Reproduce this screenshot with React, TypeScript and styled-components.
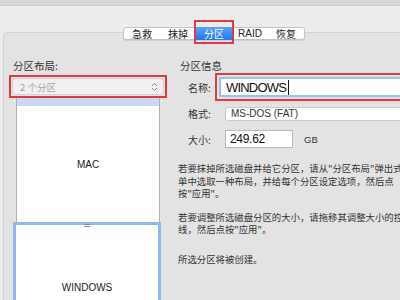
import styled, { createGlobalStyle } from "styled-components";

const GlobalStyle = createGlobalStyle`
  html, body {
    margin: 0;
    padding: 0;
    background: #ececec;
  }
  * {
    box-sizing: border-box;
  }
`;

const CJK = `"Noto Sans CJK SC", "Noto Sans", sans-serif`;
const LATIN = `"Liberation Sans", Arial, sans-serif`;

const tabs = ["急救", "抹掉", "分区", "RAID", "恢复"];

export default function App() {
  return (
    <>
      <GlobalStyle />
      <Window>
        <TopBar />
        <Panel>
          <Tabs>
            {tabs.map((t) => (
              <Tab key={t} active={t === "分区"} latin={t === "RAID"}>
                {t}
                {t === "分区" && <TabHighlight />}
              </Tab>
            ))}
          </Tabs>
          <Body>
            <LeftColumn>
              <Label>分区布局:</Label>
              <RedBox>
                <Popup>
                  <PopupText>2 个分区</PopupText>
                  <Chevrons />
                </Popup>
              </RedBox>
              <MacPartition>
                <SelectionStripe />
                <PartitionName>MAC</PartitionName>
              </MacPartition>
              <WindowsPartition>
                <Handle />
                <PartitionName>WINDOWS</PartitionName>
              </WindowsPartition>
            </LeftColumn>
            <RightColumn>
              <Label>分区信息</Label>
              <Row>
                <FieldLabel width={27}>名称:</FieldLabel>
                <NameBox>
                  <NameInput>
                    WINDOWS
                    <Caret />
                  </NameInput>
                </NameBox>
              </Row>
              <Row gap={5}>
                <FieldLabel width={37}>格式:</FieldLabel>
                <FormatPopup>
                  <span>MS-DOS (FAT)</span>
                  <PopupButton />
                </FormatPopup>
              </Row>
              <Row gap={9}>
                <FieldLabel width={37}>大小:</FieldLabel>
                <SizeInput>249.62</SizeInput>
                <Unit>GB</Unit>
              </Row>
              <Description>
                <Para space={11}>
                  若要抹掉所选磁盘并给它分区，请从"分区布局"弹出式
                  <br />
                  单中选取一种布局，并给每个分区设定选项，然后点
                  <br />
                  按"应用"。
                </Para>
                <Para space={17}>
                  若要调整所选磁盘分区的大小，请拖移其调整大小的控
                  <br />
                  线，然后点按"应用"。
                </Para>
                <Para space={0}>所选分区将被创建。</Para>
              </Description>
            </RightColumn>
          </Body>
        </Panel>
      </Window>
    </>
  );
}

function Chevrons() {
  return (
    <svg width="7" height="10" viewBox="0 0 7 10">
      <path
        d="M1 4 L3.5 1.5 L6 4 M1 6 L3.5 8.5 L6 6"
        fill="none"
        stroke="#8a8a8a"
        strokeWidth="1"
      />
    </svg>
  );
}

const Window = styled.div`
  width: 400px;
  height: 300px;
  overflow: hidden;
  background: #ececec;
  font-family: ${CJK};
  color: #2c2c2c;
`;

const TopBar = styled.div`
  height: 6px;
  background: #d7d7d7;
  border-bottom: 1px solid #cdcdcd;
`;

const Panel = styled.div`
  margin: 26px 0 0 3px;
  width: 440px;
  height: 300px;
  background: #e3e3e3;
  border: 1px solid #d2d2d2;
  border-radius: 5px;
`;

const Tabs = styled.div`
  display: flex;
  margin: -6px 0 0 119px;
  width: 182px;
  height: 13px;
  background: #fff;
  border: 1px solid #c4c4c4;
  border-radius: 3px;
  box-shadow: 0 1px 0 rgba(0, 0, 0, 0.08);
`;

const Tab = styled.div<{ active: boolean; latin: boolean }>`
  position: relative;
  flex: 1;
  display: flex;
  align-items: center;
  justify-content: center;
  font-family: ${(p) => (p.latin ? LATIN : CJK)};
  font-size: 10px;
  line-height: 1;
  color: ${(p) => (p.active ? "#fff" : "#222")};
  background: ${(p) =>
    p.active ? "linear-gradient(#5aa2f8, #2178f2)" : "transparent"};
  margin: -1px 0;
`;

const TabHighlight = styled.div`
  position: absolute;
  top: -7px;
  bottom: -4px;
  left: -2px;
  right: -2px;
  border: 2px solid #e23a3f;
`;

const Body = styled.div`
  display: flex;
  gap: 9px;
  padding: 19px 0 0 5px;
`;

const LeftColumn = styled.div`
  width: 158px;
  display: flex;
  flex-direction: column;
`;

const RightColumn = styled.div`
  flex: 1;
  display: flex;
  flex-direction: column;
`;

const Label = styled.div`
  height: 14px;
  margin-left: 4px;
  font-size: 10.5px;
  line-height: 14px;
  color: #333;
`;

const RedBox = styled.div`
  margin-top: 2px;
  height: 23px;
  border: 2px solid #e23a3f;
  padding: 1px;
`;

const Popup = styled.div`
  height: 100%;
  display: flex;
  align-items: center;
  justify-content: space-between;
  padding: 0 5px 0 7px;
  background: #f1f1f1;
  border: 1px solid #d4d4d4;
  border-radius: 3px;
`;

const PopupText = styled.span`
  font-size: 9.5px;
  color: #a3a3a3;
`;

const MacPartition = styled.div`
  margin: 0 7px;
  height: 124px;
  background: #fff;
  border-left: 1px solid #b3b3b3;
  border-right: 1px solid #b3b3b3;
  display: flex;
  flex-direction: column;
`;

const SelectionStripe = styled.div`
  height: 8px;
  background: #c9d9f3;
`;

const PartitionName = styled.div`
  flex: 1;
  display: flex;
  align-items: center;
  justify-content: center;
  font-family: ${LATIN};
  font-size: 10px;
  color: #222;
`;

const WindowsPartition = styled.div`
  position: relative;
  margin: 0 6px 0 4px;
  height: 130px;
  background: #fff;
  border: 3px solid #92b7e8;
  display: flex;
  flex-direction: column;
`;

const Handle = styled.div`
  position: absolute;
  top: -1px;
  left: 50%;
  width: 6px;
  height: 3px;
  margin-left: -3px;
  border-top: 1px solid #8a8a8a;
  border-bottom: 1px solid #8a8a8a;
`;

const Row = styled.div<{ gap?: number }>`
  display: flex;
  align-items: center;
  margin-top: ${(p) => p.gap ?? 0}px;
  padding-left: 12px;
`;

const FieldLabel = styled.div<{ width: number }>`
  width: ${(p) => p.width}px;
  flex-shrink: 0;
  font-size: 10px;
  color: #333;
`;

const NameBox = styled.div`
  flex: 1;
  height: 28px;
  border: 2px solid #e23a3f;
  padding: 2px;
  margin-right: -20px;
`;

const NameInput = styled.div`
  height: 100%;
  display: flex;
  align-items: center;
  padding-left: 5px;
  background: #fff;
  border: 2px solid #9dc1ee;
  font-family: ${LATIN};
  font-size: 13px;
  letter-spacing: -0.8px;
  color: #111;
`;

const Caret = styled.span`
  width: 1px;
  height: 15px;
  margin-left: 2px;
  background: #111;
`;

const FormatPopup = styled.div`
  flex: 1;
  height: 14px;
  display: flex;
  align-items: center;
  justify-content: space-between;
  padding-left: 5px;
  background: #fff;
  border: 1px solid #cbcbcb;
  border-radius: 3px;
  overflow: hidden;
  font-family: ${LATIN};
  font-size: 10px;
  color: #333;
`;

const PopupButton = styled.div`
  width: 20px;
  height: 100%;
  margin-left: auto;
  background: linear-gradient(#5aa2f8, #2178f2);
  border-left: 1px solid #d5d5d5;
  margin-right: -22px;
`;

const SizeInput = styled.div`
  width: 68px;
  height: 18px;
  display: flex;
  align-items: center;
  padding-left: 4px;
  background: #fff;
  border: 1px solid #bababa;
  font-family: ${LATIN};
  font-size: 12px;
  letter-spacing: -0.3px;
  color: #111;
`;

const Unit = styled.div`
  margin-left: 11px;
  font-family: ${LATIN};
  font-size: 9.5px;
  color: #333;
`;

const Description = styled.div`
  margin: 14px 0 0 2px;
  font-size: 9.4px;
  line-height: 12.5px;
  color: #333;
  white-space: nowrap;
`;

const Para = styled.p<{ space: number }>`
  margin: 0 0 ${(p) => p.space}px 0;
`;
